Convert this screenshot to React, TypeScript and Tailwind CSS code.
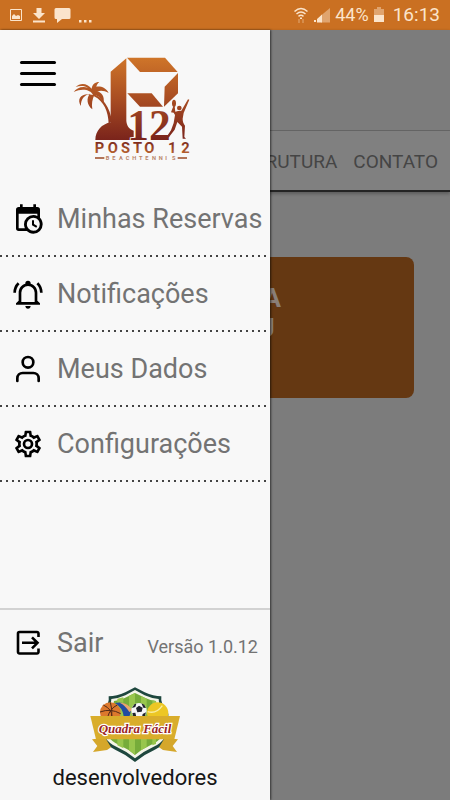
import type { ReactNode } from 'react';
import { FiUser } from 'react-icons/fi';

interface MenuItem {
  label: string;
  icon: ReactNode;
}

function CalendarClockIcon() {
  return (
    <svg viewBox="0 0 24 24" className="size-8 shrink-0" fill="currentColor" aria-hidden="true">
      <path d="M15 13h1.5v2.82l2.44 1.41-.75 1.3L15 16.69V13m4-5H5v11h4.67c-.43-.91-.67-1.93-.67-3a7 7 0 0 1 7-7c1.07 0 2.09.24 3 .67V8M5 21a2 2 0 0 1-2-2V5c0-1.11.89-2 2-2h1V1h2v2h8V1h2v2h1a2 2 0 0 1 2 2v6.1c1.24 1.26 2 2.99 2 4.9a7 7 0 0 1-7 7c-1.91 0-3.64-.76-4.9-2H5m11-9.85A4.85 4.85 0 0 0 11.15 16c0 2.68 2.17 4.85 4.85 4.85A4.85 4.85 0 0 0 20.85 16c0-2.68-2.17-4.85-4.85-4.85Z" />
    </svg>
  );
}

function BellRingIcon() {
  return (
    <svg viewBox="0 0 24 24" className="size-8 shrink-0" fill="currentColor" aria-hidden="true">
      <path d="M10 21h4c0 1.1-.9 2-2 2s-2-.9-2-2m11-2v1H3v-1l2-2v-6c0-3.1 2.03-5.83 5-6.71V4a2 2 0 0 1 2-2 2 2 0 0 1 2 2v.29c2.97.88 5 3.61 5 6.71v6l2 2m-4-8a5 5 0 0 0-5-5 5 5 0 0 0-5 5v7h10v-7m2.75-7.81-1.42 1.42A8.98 8.98 0 0 1 21 11h2c0-2.93-1.16-5.75-3.25-7.81M1 11h2c0-2.4.96-4.7 2.67-6.39L4.25 3.19A10.96 10.96 0 0 0 1 11" />
    </svg>
  );
}

function CogIcon() {
  return (
    <svg viewBox="0 0 24 24" className="size-8 shrink-0" fill="currentColor" aria-hidden="true">
      <path d="M12 8a4 4 0 0 1 4 4 4 4 0 0 1-4 4 4 4 0 0 1-4-4 4 4 0 0 1 4-4m0 2a2 2 0 0 0-2 2 2 2 0 0 0 2 2 2 2 0 0 0 2-2 2 2 0 0 0-2-2m-2 12c-.25 0-.46-.18-.5-.42l-.37-2.65c-.63-.25-1.17-.59-1.69-.99l-2.49 1.01c-.22.08-.49 0-.61-.22l-2-3.46a.493.493 0 0 1 .12-.64l2.11-1.66L4.5 12l.07-1-2.11-1.63a.493.493 0 0 1-.12-.64l2-3.46c.12-.22.39-.31.61-.22l2.49 1c.52-.39 1.06-.73 1.69-.98l.37-2.65c.04-.24.25-.42.5-.42h4c.25 0 .46.18.5.42l.37 2.65c.63.25 1.17.59 1.69.98l2.49-1c.22-.09.49 0 .61.22l2 3.46c.13.22.07.49-.12.64L19.43 11l.07 1-.07 1 2.11 1.63c.19.15.25.42.12.64l-2 3.46c-.12.22-.39.31-.61.22l-2.49-1c-.52.39-1.06.73-1.69.98l-.37 2.65c-.04.24-.25.42-.5.42h-4m1.25-18-.37 2.61c-1.2.25-2.26.89-3.03 1.78L5.44 7.35l-.75 1.3L6.8 10.2a5.55 5.55 0 0 0 0 3.6l-2.12 1.56.75 1.3 2.43-1.04c.77.88 1.82 1.52 3.01 1.76l.37 2.62h1.52l.37-2.61c1.19-.25 2.24-.89 3.01-1.77l2.43 1.04.75-1.3-2.12-1.55c.4-1.17.4-2.44 0-3.61l2.11-1.55-.75-1.3-2.41 1.04a5.42 5.42 0 0 0-3.03-1.77L12.75 4h-1.5Z" />
    </svg>
  );
}

function ExitIcon() {
  return (
    <svg viewBox="0 0 32 32" className="size-8 shrink-0" fill="none" stroke="currentColor" aria-hidden="true">
      <path d="M26.5 10V6.5a1.5 1.5 0 0 0-1.5-1.5H7.5A1.5 1.5 0 0 0 6 6.500v18.500a1.500 1.500 0 0 0 1.500 1.500H25a1.500 1.500 0 0 0 1.500-1.500V21.500" strokeWidth="2.600" />
      <path d="M10 15.800h15M20 10.300l5.500 5.500-5.500 5.500" strokeWidth="2.600" />
    </svg>
  );
}

function PostoLogo() {
  return (
    <svg viewBox="0 0 420 375" className="h-[125px] w-[140px]" role="img" aria-label="Posto 12 Beachtennis">
      <defs>
        <linearGradient id="rust" gradientUnits="userSpaceOnUse" x1="0" y1="38" x2="0" y2="290">
          <stop offset="0" stopColor="#cf7529" />
          <stop offset="0.5" stopColor="#a84c22" />
          <stop offset="1" stopColor="#78221b" />
        </linearGradient>
        <linearGradient id="rustText" gradientUnits="userSpaceOnUse" x1="0" y1="290" x2="0" y2="328">
          <stop offset="0" stopColor="#7c2a1c" />
          <stop offset="1" stopColor="#bb6530" />
        </linearGradient>
      </defs>
      <g fill="url(#rust)">
        <path d="M140 80 187 40v188c2 16 8 24 22 29v28H94c0-28 20-48 46-53z" />
        <path d="M189 38h114l38 43H228z" />
        <path d="M342 84v61l-42 40 2-60z" />
        <path d="M190 145h73l34 40h-69z" />
        <path d="M134 236c-1-36-14-67-44-82l-4-8c30 8 52 42 58 82z" />
        <path d="M87 150c-7-15-31-21-58-9 8-12 25-19 43-13-10-6-24-7-37-2 13-13 34-13 48 5 1-12 10-20 23-20-5 4-8 9-9 14 14-2 29 3 37 19-12-7-23-9-34-5 13 4 22 14 19 35-8-15-17-22-28-24-6 13-9 26-6 43-16-13-19-33-7-47-17 4-28 16-27 37-15-22 3-42 36-33z" />
      </g>
      <g fill="url(#rust)" stroke="#f8f8f8" strokeWidth="5" paintOrder="stroke" fontFamily="Liberation Serif, serif" fontWeight="700" fontSize="130">
        <text x="190" y="285">12</text>
      </g>
      <g fill="url(#rust)">
        <ellipse cx="330" cy="175" rx="6" ry="11" />
        <circle cx="346" cy="189" r="7" />
        <path d="M328 184h4l2 16 8-2 10-1 20-34 4 1-17 40-3 17c0 8 2 14 7 21l-2 34 5 5h-10l-2-36-14-14-8 23-14 18-4 6-4-6 11-16 8-22 4-24-4-7-8-1z" />
      </g>
      <text x="92 131 171 207 241 312 352" y="325" fill="url(#rustText)" fontFamily="Liberation Sans Narrow, Roboto, sans-serif" fontWeight="700" fontSize="44">
        POSTO12
      </text>
      <path d="M93 339h28M341 339h28" stroke="#9a4a24" strokeWidth="5" />
      <text x="125 145 165 185 205 225 244 264 284 304 324" y="345" fill="#b98468" fontFamily="Liberation Sans Narrow, Roboto, sans-serif" fontWeight="700" fontSize="17">
        BEACHTENNIS
      </text>
    </svg>
  );
}

function QuadraFacilLogo() {
  return (
    <svg viewBox="0 0 330 270" className="h-[90px] w-[110px]" role="img" aria-label="Quadra Fácil">
      <path d="M165 22 194 37q26 12 50 12-4 24 21 52v72q-12 22-42 37-32 14-58 36-26-22-58-36-30-15-42-37v-72q25-28 21-52 24 0 50-12z" fill="#1e473e" />
      <path d="M165 30 194 46q22 10 42 11 0 22 20 47v66q-12 20-38 32-29 13-53 33-24-20-53-33-26-12-38-32v-66q20-25 20-47 20-1 42-11z" fill="#f4f5e8" />
      <path d="M165 39 196 54q15 7 32 9 2 22 19 42v62q-12 18-36 29-25 11-46 29-21-18-46-29-24-11-36-29v-62q17-20 19-42 17-2 32-9z" fill="#76ac3a" />
      <path d="M112 56l18-4v153l-18-9zM147 47l18-8v186l-18-14zM183 48l17 8v145l-17 10zM217 61l11 3v128l-11 4z" fill="#98c64d" />
      <path d="M36 178l40-4 17 28-12 8-42 6 13-18zM294 178l-40-4-17 28 12 8 42 6-13-18z" fill="#d5a72b" />
      <circle cx="91" cy="98" r="31" fill="#dc782d" />
      <path d="M60 96q32-12 62 5M91 67q7 22 4 45M70 75q26 12 26 36M112 75q-22 10-29 36" fill="none" stroke="#542b17" strokeWidth="3" />
      <path d="M105 69q30-8 49 20l-6 21h-16q-5-28-27-41z" fill="#224ba0" />
      <path d="M119 68q25-1 38 23l-9 5q-12-20-29-28z" fill="#e8a66a" />
      <circle cx="177" cy="92" r="23" fill="#f6f6f6" />
      <path d="M168 84l9-7 11 6-3 12-13 2zM156 84l7-11 6-2-3 10zM184 70l9 4 5 10-8-1zM157 99l9-1 3 12h-9zM188 102l10-5-4 14h-8z" fill="#20242b" />
      <circle cx="233" cy="99" r="32" fill="#edc724" />
      <path d="M203 95q26 8 44-18" fill="none" stroke="#f9eda0" strokeWidth="4" />
      <path d="M31 108h269l-17 70H48z" fill="#d9ad2b" />
      <text x="165" y="159" textAnchor="middle" fill="#9b2424" stroke="#fff" strokeWidth="7" paintOrder="stroke" fontFamily="Liberation Serif, serif" fontWeight="700" fontStyle="italic" fontSize="39">
        Quadra Fácil
      </text>
    </svg>
  );
}

function StatusBar() {
  return (
    <div className="flex h-[30px] items-center justify-between bg-[#ca7022] pr-2.5 pl-2 text-[#fbe4cb]">
      <div className="flex items-center gap-2">
        <svg viewBox="0 0 16 16" className="size-4" aria-hidden="true">
          <path d="M2.500 2.500h11v11h-11z" fill="none" stroke="currentColor" />
          <path d="M4 12V9l2-2 2 2 2-1 2 1v3z" fill="currentColor" />
        </svg>
        <svg viewBox="0 0 14 16" className="h-4 w-3.5" fill="currentColor" aria-hidden="true">
          <path d="M4.500 1h5v5h3.500L7 12 1 6h3.500zM1 13.500h12v2H1z" />
        </svg>
        <svg viewBox="0 0 17 16" className="h-4 w-[17px]" fill="currentColor" aria-hidden="true">
          <path d="M2 1h13a1.500 1.500 0 0 1 1.500 1.500v8A1.500 1.500 0 0 1 15 12H8l-5 4v-4H2A1.500 1.500 0 0 1 .5 10.500v-8A1.500 1.500 0 0 1 2 1z" />
        </svg>
        <svg viewBox="0 0 14 16" className="h-4 w-3.5" fill="currentColor" aria-hidden="true">
          <path d="M0 13h2.500v2.500H0zM5 13h2.500v2.500H5zM10 13h2.500v2.500H10z" />
        </svg>
      </div>
      <div className="flex items-center gap-1">
        <svg viewBox="0 0 16 18" className="h-[18px] w-4" fill="none" stroke="currentColor" aria-hidden="true">
          <path d="M1.500 5.500q6.500-6 13 0M3.500 8q4.500-4 9 0M5.500 10.300q2.500-2 5 0" strokeWidth="1.500" />
          <path d="M7 11.500h2v1.500H7z" fill="currentColor" stroke="none" />
          <path d="M6 13v4M10 13v4" opacity=".5" />
        </svg>
        <svg viewBox="0 0 18 16" className="h-4 w-[18px]" fill="currentColor" aria-hidden="true">
          <path d="M8 8.500 17 1v14.500H8z" opacity=".45" />
          <path d="M4 12 9 7.500v8H4zM1 13h2v2H1z" />
        </svg>
        <span className="text-lg leading-5">44%</span>
        <svg viewBox="0 0 12 18" className="mr-1 h-[18px] w-3" fill="currentColor" aria-hidden="true">
          <path d="M4 1h4v2h3v7H1V3h3z" opacity=".45" />
          <path d="M1 9h10v7H1z" />
        </svg>
        <span className="text-[19px] leading-5">16:13</span>
      </div>
    </div>
  );
}

const items: MenuItem[] = [
  { label: 'Minhas Reservas', icon: <CalendarClockIcon /> },
  { label: 'Notificações', icon: <BellRingIcon /> },
  { label: 'Meus Dados', icon: <FiUser className="size-8 shrink-0" aria-hidden="true" /> },
  { label: 'Configurações', icon: <CogIcon /> },
];

function Drawer() {
  return (
    <aside className="z-10 col-start-1 row-start-1 flex w-3/5 flex-col bg-[#f8f8f8] shadow-[1px_0_2px_rgba(0,0,0,0.6)]">
      <div className="flex h-[152px] items-start gap-2 pt-[15px] pl-5">
        <button type="button" aria-label="Fechar menu" className="mt-4 flex w-9 shrink-0 flex-col gap-2">
          <span className="h-[3px] rounded-full bg-black" />
          <span className="h-[3px] rounded-full bg-black" />
          <span className="h-[3px] rounded-full bg-black" />
        </button>
        <div className="shrink-0">
          <PostoLogo />
        </div>
      </div>
      <nav>
        <ul>
          {items.map((item) => (
            <li key={item.label}>
              <a href="#" className="flex h-[73px] items-center gap-[13px] pl-3 text-black">
                {item.icon}
                <span className="text-[27px] leading-8 whitespace-nowrap text-[#737373]">{item.label}</span>
              </a>
              <div className="h-0.5 bg-[repeating-linear-gradient(90deg,#444_0_2px,transparent_2px_6px)]" />
            </li>
          ))}
        </ul>
      </nav>
      <footer className="mt-auto border-t-2 border-[#d2d2d2] bg-[#f7f7f7]">
        <div className="flex h-[66px] items-center justify-between pr-3 pl-3">
          <button type="button" className="flex items-center gap-[13px] text-black">
            <ExitIcon />
            <span className="text-[27px] leading-8 text-[#737373]">Sair</span>
          </button>
          <span className="pt-2 text-lg leading-6 text-[#737373]">Versão 1.0.12</span>
        </div>
        <div className="flex flex-col items-center pt-1 pb-2.5">
          <QuadraFacilLogo />
          <span className="-mt-1 text-[22px] leading-6 text-[#161616]">desenvolvedores</span>
        </div>
      </footer>
    </aside>
  );
}

export default function App() {
  return (
    <div className="flex min-h-screen flex-col overflow-hidden font-[Roboto,sans-serif]">
      <StatusBar />
      <div className="grid flex-1 grid-cols-1">
        <main className="col-start-1 row-start-1 flex flex-col bg-[#7c7c7c]">
          <header className="h-[101px] border-b border-[#666] shadow-[0_1px_3px_rgba(0,0,0,0.3)]" />
          <nav className="flex h-[61px] items-center justify-end gap-4 border-b-2 border-[#242424] bg-[#808080] pt-1 pr-3 text-[19px] text-[#454545] shadow-[0_2px_3px_rgba(0,0,0,0.25)]">
            <a href="#">ESTRUTURA</a>
            <a href="#">CONTATO</a>
          </nav>
          <section className="mx-9 mt-[65px] flex h-[141px] flex-col items-center rounded-lg bg-[#653812] pt-[26px] text-[26px] leading-[30px] font-bold text-[#8a7f78]">
            <span>RESERVA</span>
            <span>FECHOU</span>
          </section>
        </main>
        <Drawer />
      </div>
    </div>
  );
}
